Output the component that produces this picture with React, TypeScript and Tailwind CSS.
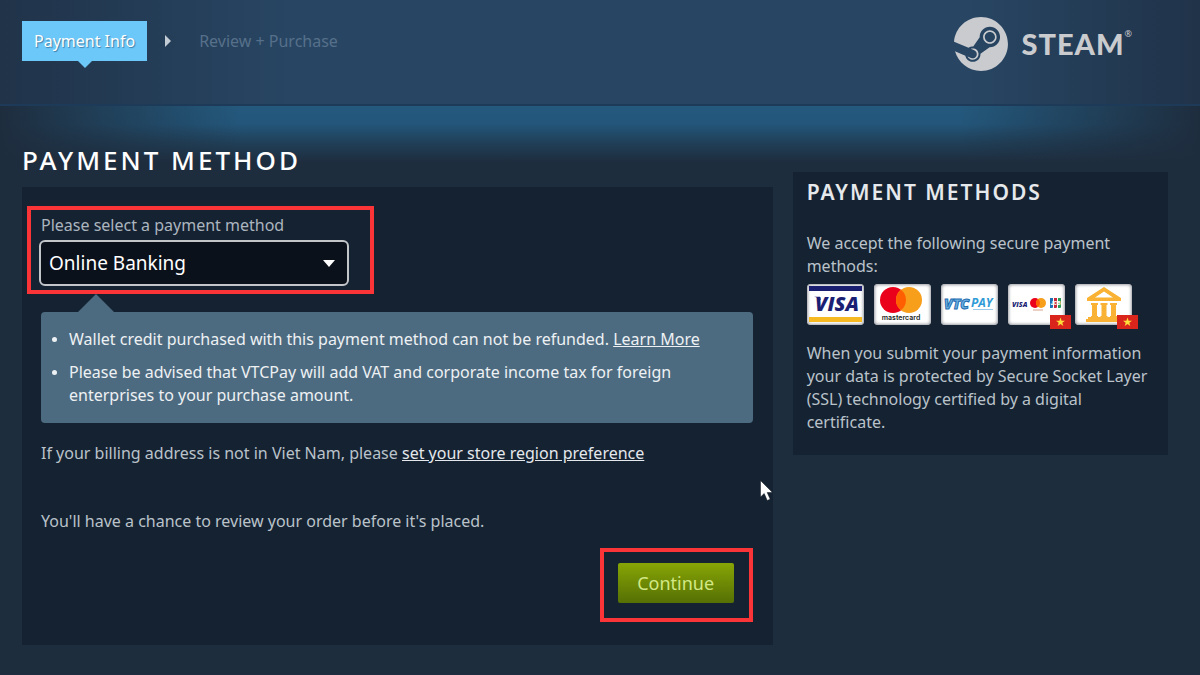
import { useState } from 'react';
import type { ReactNode } from 'react';
import { SiSteam } from 'react-icons/si';

const paymentOptions = ['Online Banking', 'Visa', 'MasterCard', 'VTCPay'];

function VisaLogo() {
    return (
        <svg viewBox="0 0 57 41" className="w-full h-full" role="img" aria-label="Visa">
            <rect x="2" y="2" width="53" height="5" fill="#1a1f71" />
            <rect x="2" y="33" width="53" height="5" fill="#f7b922" />
            <text x="30" y="27" textAnchor="middle" fontFamily="Open Sans, sans-serif" fontSize="20" fontWeight="800" fontStyle="italic" fill="#1b1f74">VISA</text>
            <path d="M7 12.700h6l1 3.500c-2-1.900-4-3-7-3.500Z" fill="#1b1f74" />
        </svg>
    );
}

function MastercardLogo() {
    return (
        <svg viewBox="0 0 57 41" className="w-full h-full" role="img" aria-label="Mastercard">
            <circle cx="19" cy="16" r="13" fill="#eb001b" />
            <circle cx="35" cy="16" r="13" fill="#f79e1b" />
            <path d="M27 5.750a13 13 0 0 1 0 20.500a13 13 0 0 1 0-20.500Z" fill="#ff5f00" />
            <text x="27" y="36" textAnchor="middle" fontFamily="Inter, sans-serif" fontSize="7" fontWeight="600" fill="#231f20">mastercard</text>
        </svg>
    );
}

function VtcPayLogo() {
    return (
        <svg viewBox="0 0 57 41" className="w-full h-full" role="img" aria-label="VTCPay">
            <text x="3" y="25" fontFamily="Open Sans, sans-serif" fontSize="14" fontWeight="800" fontStyle="italic" fill="#6fb1e0" stroke="#1d6db1" strokeWidth="1">VTC</text>
            <text x="30" y="23" fontFamily="Open Sans, sans-serif" fontSize="12" fontWeight="700" fontStyle="italic" fill="#2f9bd6">PAY</text>
            <path d="M32 25.500h20" stroke="#9bcbea" strokeWidth="1" />
        </svg>
    );
}

function LocalCardsLogo() {
    return (
        <svg viewBox="0 0 57 41" className="w-full h-full" role="img" aria-label="Visa, Mastercard and JCB">
            <text x="4" y="23" fontFamily="Open Sans, sans-serif" fontSize="7" fontWeight="800" fontStyle="italic" fill="#1b1f74">VISA</text>
            <circle cx="27" cy="19" r="5" fill="#eb001b" />
            <circle cx="33" cy="19" r="5" fill="#f79e1b" />
            <path d="M30 15a5 5 0 0 1 0 8a5 5 0 0 1 0-8Z" fill="#ff5f00" />
            <path d="M25 26h10" stroke="#d9a08c" />
            <path d="M44 14h-2v10h2q1 0 1-1v-9Z" fill="#1f6fb5" />
            <path d="M46 14h3v9q0 1-1 1h-2Z" fill="#c8283c" />
            <path d="M50 14h3v9q0 1-1 1h-2Z" fill="#2e9a57" />
            <text x="47.500" y="21" textAnchor="middle" fontFamily="Inter, sans-serif" fontSize="5" fontWeight="800" fill="#fff">JCB</text>
        </svg>
    );
}

function BankLogo() {
    return (
        <svg viewBox="0 0 57 41" className="w-full h-full" role="img" aria-label="Online banking" fill="#f9b233">
            <path fillRule="evenodd" d="M29 3 46 14v3H12v-3ZM29 7.500 20 13.500h18Z" />
            <path d="M16 19h7v2h-1v11h1v2h-7v-2h1V21h-1ZM25.500 19h7v2h-1v11h1v2h-7v-2h1V21h-1ZM35 19h7v2h-1v11h1v2h-7v-2h1V21h-1Z" />
            <path d="M13 33h32v2h2v3H11v-3h2Z" />
        </svg>
    );
}

function VietnamFlag() {
    return (
        <svg viewBox="0 0 21 14" className="absolute -right-1.5 -bottom-1 w-[21px] h-3.5" aria-hidden="true">
            <rect width="21" height="14" fill="#da251d" />
            <path d="m10.500 2.500 1.100 3.200H15l-2.700 2 1 3.300-2.800-2-2.800 2 1-3.300-2.700-2h3.400Z" fill="#ffdf3a" />
        </svg>
    );
}

const acceptedMethods: { id: string; logo: ReactNode; flag: boolean }[] = [
    { id: 'visa', logo: <VisaLogo />, flag: false },
    { id: 'mastercard', logo: <MastercardLogo />, flag: false },
    { id: 'vtcpay', logo: <VtcPayLogo />, flag: false },
    { id: 'local-cards', logo: <LocalCardsLogo />, flag: true },
    { id: 'bank', logo: <BankLogo />, flag: true },
];

function Header() {
    return (
        <header className="flex items-start justify-between h-[106px] pl-[22px] pr-[68px] border-b-2 border-[#1d3b58] bg-[linear-gradient(to_right,#203349,#284664_25%,#284664_80%,#203349)]">
            <nav className="flex items-center pt-[21px]">
                <a href="#payment" className="relative flex items-center h-10 px-3 bg-[#6dc8fa] text-white [text-shadow:1px_1px_1px_#3d7fa8]">
                    Payment Info
                    <svg viewBox="0 0 14 7" className="absolute top-full left-1/2 -translate-x-1/2 w-3.5 h-[7px]" aria-hidden="true">
                        <path d="M0 0h14L7 7Z" fill="#6dc8fa" />
                    </svg>
                </a>
                <svg viewBox="0 0 6 12" className="ml-[18px] w-1.5 h-3" aria-hidden="true">
                    <path d="M0 0v12l6-6Z" fill="#c3ccd5" />
                </svg>
                <span className="ml-7 text-[#56708a]">Review + Purchase</span>
            </nav>

            <div className="flex items-center gap-[13px] pt-[17px] text-[#c9cbce]">
                <SiSteam className="w-[54px] h-[54px]" />
                <div className="flex items-start">
                    <span className="font-['Lato',sans-serif] font-black text-[29px] leading-9 tracking-[1px]">STEAM</span>
                    <span className="text-[9px] leading-4">®</span>
                </div>
            </div>
        </header>
    );
}

function Notice() {
    return (
        <div className="relative mt-[26px] py-4 pl-7 pr-6 rounded bg-[#4d6b80] text-[#edf1f4]">
            <svg viewBox="0 0 36 18" className="absolute left-[37px] bottom-full w-9 h-[18px]" aria-hidden="true">
                <path d="M0 18 18 0l18 18Z" fill="#4d6b80" />
            </svg>
            <ul className="flex flex-col gap-2.5 list-disc marker:text-sm">
                <li>
                    Wallet credit purchased with this payment method can not be refunded.{' '}
                    <a href="#learn-more" className="underline">Learn More</a>
                </li>
                <li>
                    Please be advised that VTCPay will add VAT and corporate income tax for foreign enterprises to your purchase amount.
                </li>
            </ul>
        </div>
    );
}

function PaymentForm() {
    const [method, setMethod] = useState(paymentOptions[0]);

    return (
        <form
            onSubmit={(e) => e.preventDefault()}
            className="relative pt-[27px] pb-[42px] pl-[19px] pr-5 bg-[#152232]"
        >
            <div className="relative w-[310px] -ml-0.5">
                <label htmlFor="payment-method" className="block pl-0.5 text-[#acb5bf]">
                    Please select a payment method
                </label>
                <div className="relative mt-[3px]">
                    <select
                        id="payment-method"
                        value={method}
                        onChange={(e) => setMethod(e.target.value)}
                        className="block w-full h-[46px] pl-2 pr-9 appearance-none rounded-md border-2 border-[#c3c6c9] bg-[#0b111b] text-[19px] text-white"
                    >
                        {paymentOptions.map((option) => (
                            <option key={option}>{option}</option>
                        ))}
                    </select>
                    <svg viewBox="0 0 12 7" className="absolute right-3.5 top-5 w-3 h-[7px] pointer-events-none" aria-hidden="true">
                        <path d="M0 0h12L6 7Z" fill="#fff" />
                    </svg>
                </div>
                <div className="absolute -left-3 -right-[25px] -top-2 -bottom-2 border-4 border-[#fb3537] pointer-events-none" />
            </div>

            <Notice />

            <p className="mt-[19px]">
                If your billing address is not in Viet Nam, please{' '}
                <a href="#region" className="underline text-[#e4e8ec]">set your store region preference</a>
            </p>
            <p className="mt-[45px]">You'll have a chance to review your order before it's placed.</p>

            <div className="flex justify-end mt-[30px] pr-[19px]">
                <div className="relative">
                    <button type="submit" className="block h-10 w-[116px] rounded-xs bg-linear-to-b from-[#87a505] to-[#567004] text-lg text-[#d2e885] cursor-pointer">
                        Continue
                    </button>
                    <div className="absolute -left-[18px] -right-[19px] -top-[15px] -bottom-[19px] border-4 border-[#fb3537] pointer-events-none" />
                </div>
            </div>

            {/* Mouse pointer */}
            <svg viewBox="0 0 13 21" className="absolute right-0 top-[293px] w-[13px] h-[21px]" aria-hidden="true">
                <path d="M.5.500v16.500l3.700-3.500 3 7 3-1.300-3-6.700h5.300Z" fill="#fff" stroke="#0b111b" strokeWidth=".5" />
            </svg>
        </form>
    );
}

function Sidebar() {
    return (
        <aside className="mt-[30px] pt-1.5 pb-[21px] px-3.5 bg-[#152232]">
            <h2 className="text-[21px] leading-7 tracking-[2px] font-semibold text-[#e6e9ec]">PAYMENT METHODS</h2>
            <p className="mt-[26px]">We accept the following secure payment methods:</p>
            <div className="flex gap-2.5 mt-1.5">
                {acceptedMethods.map(({ id, logo, flag }) => (
                    <div key={id} className="relative w-[57px] h-[41px] rounded-sm bg-white shadow-[inset_0_0_3px_1px_#9a9da3]">
                        {logo}
                        {flag && <VietnamFlag />}
                    </div>
                ))}
            </div>
            <p className="mt-[17px]">
                When you submit your payment information your data is protected by Secure Socket Layer (SSL) technology certified by a digital certificate.
            </p>
        </aside>
    );
}

export default function App() {
    return (
        <div className="min-h-screen bg-[#1e2d3e] font-['Noto_Sans',sans-serif] text-base leading-[23px] text-[#bac2ca]">
            <Header />
            <div className="bg-[linear-gradient(to_right,#1e2d3e,transparent_20%,transparent_80%,#1e2d3e),linear-gradient(to_bottom,#24597d,#23567a_18px,#204059_36px,#1e2d3e_56px)]">
                <main className="grid grid-cols-[2fr_1fr] items-start gap-5 pt-9 pb-[30px] pl-[22px] pr-8">
                    <section>
                        <h1 className="mb-[9px] text-[26px] leading-9 tracking-[3px] font-medium text-white">PAYMENT METHOD</h1>
                        <PaymentForm />
                    </section>
                    <Sidebar />
                </main>
            </div>
        </div>
    );
}
